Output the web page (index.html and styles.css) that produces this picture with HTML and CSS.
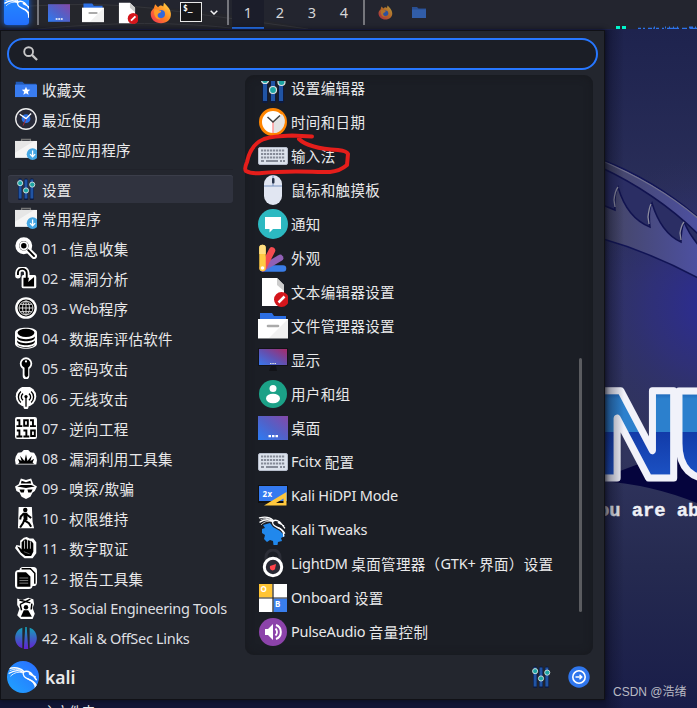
FILE: index.html
```html
<!DOCTYPE html>
<html lang="zh-CN">
<head>
<meta charset="utf-8">
<title>Kali</title>
<link rel="stylesheet" href="styles.css">
</head>
<body>
<svg width="0" height="0" class="defs" aria-hidden="true">
<defs>
<linearGradient id="screen" x1="0" y1="1" x2="1" y2="0"><stop offset="0" stop-color="#2c7cf4"/><stop offset=".5" stop-color="#5261c8"/><stop offset="1" stop-color="#8548a8"/></linearGradient>
<linearGradient id="screen2" x1="0" y1="1" x2="1" y2="0"><stop offset="0" stop-color="#3878ed"/><stop offset=".5" stop-color="#6350b0"/><stop offset="1" stop-color="#a82a68"/></linearGradient>
<linearGradient id="off" x1="0" y1="0" x2="0" y2="1"><stop offset="0" stop-color="#12a4b8"/><stop offset="1" stop-color="#6420d0"/></linearGradient>
<linearGradient id="fox" x1="1" y1="0" x2="0" y2="1"><stop offset="0" stop-color="#ffe14a"/><stop offset=".5" stop-color="#ff8522"/><stop offset="1" stop-color="#f0285a"/></linearGradient>
<symbol id="dragon" viewBox="0 0 30 30"><g fill="none" stroke="#fff" stroke-linecap="round" stroke-linejoin="round"><path stroke-width="1.3" d="M1.500 7C7 5.700 12 6 15.500 9.500M2 11.500C7 8.500 12 8.500 15.500 11M15.500 9.500C14 14 17 15.500 20 17C25 19 27 22 26.500 26"/><path stroke-width=".8" d="M3 8.800C8 7 12 7.500 14 9.500M3.500 14C7 10.500 11 10 14 11"/><path stroke-width="1.400" d="M15.500 10.500C18 8.500 22 10 24 13L27.500 17.500M21 12L26.500 15M20 17C23 18 26 20 27.500 23"/></g></symbol>
<symbol id="desktop" viewBox="0 0 30 30"><path fill="url(#screen)" d="M0 3h30v24H0z"/><path fill="#fff" d="M10.500 22h2.500v2.300h-2.500zm3.500 0h2.500v2.300H14zm3.500 0H20v2.300h-2.500z"/></symbol>
<symbol id="files" viewBox="0 0 30 30"><path fill="#2c6fe4" d="M2 2h12l2 3h12v8H2z"/><path fill="#f1f1f1" d="M0 8h30v19.500H0z"/><path fill="#fff" d="M0 8h30L11 27H0z"/><path stroke="#aaa" stroke-width="2.600" stroke-linecap="round" d="M10 15h10"/></symbol>
<symbol id="editor" viewBox="0 0 30 30"><path fill="#fff" d="M4 1h15l7 7v21H4z"/><path fill="#ccc" d="M19 1v7l7 6V8z"/><circle cx="23.500" cy="22.500" r="7.500" fill="#d4161c"/><path stroke="#fff" stroke-width="2.500" d="M20.500 25.500l6-6"/></symbol>
<symbol id="firefox" viewBox="0 0 30 30"><path fill="url(#fox)" d="M5 9l2-6 4 4c2-3 5-3 7-1l1-5c4 4 9 8 9.500 15C29 24 23 29 15 29S1 24 1 16c0-3 2-5 4-7z"/><circle cx="15" cy="16.500" r="5.500" fill="#3269dc"/><path fill="#ff9b29" d="M6 10c3-1 6 1 9 2 1 2-2 3-4 4-2 4 1 7 5 7-7 3-12-4-10-13z"/></symbol>
<symbol id="foldstar" viewBox="0 0 30 30"><path fill="#225bb9" d="M1 5h9l3 3h16v6H1z"/><path fill="#397cf0" d="M0 9h30v17H0z"/><path fill="#fff" d="M15 12l1.600 3.700 4.200.3-3.200 2.700 1 4.300-3.600-2.300-3.600 2.300 1-4.300L9.200 16l4.200-.3z"/></symbol>
<symbol id="recent" viewBox="0 0 30 30"><circle cx="15" cy="15" r="14" fill="#282a38" stroke="#eee" stroke-width="1.800"/><circle cx="15" cy="14.500" r="6" fill="#2a70e6"/><path d="M6.500 8.500l8.500 6 7-7" fill="none" stroke="#fff" stroke-width="1.800"/><path d="M15 15l-4 9" stroke="#b02a35" stroke-width="1.300"/></symbol>
<symbol id="allapps" viewBox="0 0 30 30"><path d="M9 5V2h12v3" fill="none" stroke="#777" stroke-width="1.800"/><path fill="#e6e6e6" d="M0 4h30v23H0z"/><path fill="#fff" d="M0 20L26 4h4v23H0z" opacity=".6"/><circle cx="24" cy="22" r="8" fill="#45a7e4"/><path d="M24 17v8m-3.500-3l3.500 3.500 3.500-3.500" fill="none" stroke="#fff" stroke-width="1.800"/></symbol>
<symbol id="sliders" viewBox="0 0 30 30"><path d="M7 3v25M15 3v25M23 3v25" stroke="#0d1a40" stroke-width="5.500" stroke-linecap="round"/><path d="M7 2v26M15 2v26M23 2v26" stroke="#2054a4" stroke-width="4"/><g fill="#1da6a5" stroke="#dce4e4" stroke-width="1.200"><circle cx="7" cy="7" r="3.500"/><circle cx="15" cy="17" r="3.500"/><circle cx="23.500" cy="9" r="3.500"/></g></symbol>
<symbol id="search2" viewBox="0 0 30 30"><path d="M18 18l8 8" stroke="#fff" stroke-width="8" stroke-linecap="round"/><circle cx="12" cy="12" r="9" fill="#000" stroke="#fff" stroke-width="5"/><circle cx="12" cy="12" r="5" fill="none" stroke="#fff" stroke-width="2.500"/><path d="M18 18l8 8" stroke="#000" stroke-width="2.500" stroke-linecap="round"/></symbol>
<symbol id="unlock" viewBox="0 0 30 30"><path d="M4 12V8a6 5.500 0 0 1 12 0v6" fill="none" stroke="#fff" stroke-width="7.500" stroke-linecap="round"/><rect x="9" y="11" width="20" height="18" rx="2.500" fill="#fff"/><path d="M4 11V8a6 5.500 0 0 1 12 0v7" fill="none" stroke="#000" stroke-width="2.600"/><path fill="#000" d="M11.500 14.500H19l-1 6 8-7v13H11.500z"/></symbol>
<symbol id="globe" viewBox="0 0 30 30"><circle cx="15" cy="15" r="14.800" fill="#fff"/><circle cx="15" cy="15" r="11.500" fill="#000"/><g fill="none" stroke="#ddd" stroke-width="1.300"><circle cx="15" cy="15" r="9.500"/><ellipse cx="15" cy="15" rx="4.700" ry="9.500"/><path d="M5.500 15h19M7 10h16M7 20h16M15 5.500v19"/></g></symbol>
<symbol id="db" viewBox="0 0 30 30"><path fill="#fff" d="M0 7C1-1 29-1 30 7v16c-1 9-29 9-30 0z"/><ellipse cx="15" cy="8" rx="11.500" ry="5.500"/><path d="M3 13c4 5 20 5 24 0v2c-2 6-22 6-24 0zM3 18.500c4 5 20 5 24 0v2c-2 6-22 6-24 0zM3 24c4 5 20 5 24 0-2 6-22 6-24 0z"/></symbol>
<symbol id="key" viewBox="0 0 30 30"><circle cx="15" cy="9" r="6" stroke="#fff" stroke-width="5"/><path d="M15 12v14" stroke="#fff" stroke-width="9" stroke-linecap="round"/><path d="M9 9a6 6 0 1 1 9 5.200V26l-3 2-2-3V14.500Q9 13 9 9z"/><circle cx="15" cy="6" r="1.500" fill="#fff"/></symbol>
<symbol id="wireless" viewBox="0 0 30 30"><circle cx="15" cy="13" r="14" fill="#fff"/><path d="M15 13v14" stroke="#fff" stroke-width="7" stroke-linecap="round"/><g fill="none" stroke="#000" stroke-width="1.800"><path d="M11 18a5.500 5.500 0 0 1 0-9M19 18a5.500 5.500 0 0 0 0-9M8 21a10 10 0 0 1 0-15M22 21a10 10 0 0 0 0-15"/><path d="M15 13v14"/></g><circle cx="15" cy="13" r="2.200"/></symbol>
<symbol id="binary" viewBox="0 0 30 30"><rect width="30" height="30" rx="3" fill="#fff"/><g fill="none" stroke="#000" stroke-width="2.600"><path d="M2.500 4.500H6v8M2 12.500h8M12.500 4.500h5v7.500h-5zM20.500 4.500h4v8M20.500 12.500h8M2.500 18.500H6v8M2 26.500h8M11.500 18.500h4v8M11.500 26.500h8M22 18.500h5V26h-5z"/></g></symbol>
<symbol id="exploit" viewBox="0 0 30 30"><path fill="#fff" d="M1 13l3-5 5-1 3-3h6l3 3 5 1 3 5 1 5-1 6H1l-1-6z"/><path d="M4 23l2-2-2-5 5 3-2-7 6 7 2-9 2 9 6-7-2 7 5-3-2 5 2 2z"/></symbol>
<symbol id="spy" viewBox="0 0 30 30"><path fill="#fff" d="M8 2l7 2 7-2 3 8 5 3-3 6-3 2-3 6-6 3-6-3-3-6-4-2-2-6 5-3z"/><path d="M8 9l1-4 6 2 6-2 1 4zM3 13l5-2h14l5 2-12 2zM6 17h7l-1 4H8zm11 0h7l-2 4h-4z"/></symbol>
<symbol id="exit" viewBox="0 0 30 30"><path fill="#fff" d="M5 0h18l1 20 2 9H4z"/><circle cx="14" cy="4" r="3"/><path d="M12 9l5 2 5 4M14 10v9l5 3 3 5M13 17l-2 5-4 6M12 9l-4 4-1 4" stroke="#000" stroke-width="2.800" fill="none"/><path d="M11 8h6v10h-5z"/></symbol>
<symbol id="hand" viewBox="0 0 30 30"><path fill="#fff" d="M7 5l5-4 4-1 4 2h5l4 5v15l-5 7H13l-6-5-7-9 2-4 5 1z"/><path d="M9 17V7l3-3 2-1 3 1 3 1 3 1 2 3v11l-3 6h-8l-6-5-5-8 3 1z"/><path d="M13 5v11M17 4v12M21 6v10" stroke="#fff" stroke-width="1"/><path d="M12 20l8 3" stroke="#777"/></symbol>
<symbol id="docs" viewBox="0 0 30 30"><rect x="6" y="0" width="24" height="26" rx="5" fill="#fff"/><path d="M9 2.500h12l6 6V23" fill="none" stroke="#000" stroke-width="2"/><rect x="0" y="4" width="24" height="26" rx="5" fill="#fff"/><path d="M3 7h12l6 6v14H3z"/><path d="M6 15h12M6 18.500h12M6 22h12" stroke="#aaa"/></symbol>
<symbol id="social" viewBox="0 0 30 30"><path fill="#fff" d="M3 2l7 2 8-3 7 2 1 7-2 5 3 8-3 7H8l-5-5 3-9-3-5z"/><path d="M6 4l15 4M21 3L7 10M7 10l2 8M23 9l-1 8" stroke="#000" stroke-width="2"/><circle cx="15" cy="14" r="3"/><path d="M8 27l4-9h6l5 9z"/></symbol>
<symbol id="offsec" viewBox="0 0 30 30"><path fill="url(#off)" d="M10 1v28C-3 25-3 5 10 1zm10 0v28c13-4 13-24 0-28zM14 0h2l2 30h-6z"/></symbol>
<symbol id="clock" viewBox="0 0 30 30"><circle cx="15" cy="15" r="12.500" fill="#fff" stroke="#ff8500" stroke-width="3"/><path d="M15 15l9-8a11.500 11.500 0 0 1-9 19z" fill="#e3e3e3"/><path d="M15 15v11" stroke="#ff9a9a" stroke-width="1.500"/><path d="M9.500 10l5.500 5 7-6.500" fill="none" stroke="#404040" stroke-width="1.500"/></symbol>
<symbol id="keyboard" viewBox="0 0 30 30"><rect x=".5" y="6.500" width="29" height="17" rx="1.500" fill="#dce2ec" stroke="#b6bdcb"/><g stroke="#858b98" stroke-width="2.200"><path stroke-dasharray="2.200 .8" d="M3 9.500h24M3 13h24M3 16.500h24"/><path d="M3 20h3M8 20h12M22 20h2m1 0h2"/></g></symbol>
<symbol id="mouse" viewBox="0 0 30 30"><rect x="6" y="0" width="18" height="30" rx="9" fill="#e1e6f2"/><path d="M6 11h18M15 0v11" stroke="#7893c0"/><rect x="14" y="3" width="2.500" height="5.500" rx="1" fill="#273349"/></symbol>
<symbol id="chat" viewBox="0 0 30 30"><circle cx="15" cy="15" r="15" fill="#2cb9c1"/><path fill="#fff" d="M7 8h16v12h-8l-3.500 3.500V20H7z"/></symbol>
<symbol id="palette" viewBox="0 0 30 30"><g stroke-width="6.500" stroke-linecap="round"><path d="M5 25.500h20" stroke="#3a7de7"/><path d="M5 25l17-10" stroke="#9060b5"/><path d="M5 25L14 7.500" stroke="#f44b50"/><path d="M4.500 25V5" stroke="#ffcb43"/></g><path d="M1.200 11V5a3.200 3.200 0 0 1 6.500 0v6z" fill="#ffdf82"/><circle cx="4.500" cy="25" r="1.800" fill="#fff"/></symbol>
<symbol id="display" viewBox="0 0 30 30"><path fill="#121318" d="M0 3h30v18H0zM13 21h5l1 5h-8z"/><path fill="url(#screen2)" d="M1 4h28v16H1z"/><path fill="#ddd" d="M12 18h1.500v1H12zm2.300 0h1.500v1h-1.500zm2.300 0H18v1h-1.500z"/></symbol>
<symbol id="user" viewBox="0 0 30 30"><circle cx="15" cy="15" r="14" fill="#1ba187"/><circle cx="15" cy="9.500" r="3.500" fill="#fff"/><ellipse cx="15" cy="19.500" rx="7" ry="4.800" fill="#fff"/></symbol>
<symbol id="hidpi" viewBox="0 0 30 30"><path fill="#111" d="M0 4h30v18H0z"/><path fill="#347af0" d="M1 5h28v15H1z"/><path fill="#ffc83d" fill-rule="evenodd" d="M6 24.500L28.500 11v13.500zM18 22h7.500v-4.500z"/><text class="hidpi-label" x="4.500" y="16">2x</text></symbol>
<symbol id="tweaks" viewBox="0 0 30 30"><path fill="#2188ec" d="M5 10l7-2 3 4 7 4 5 5-4 2 1 3-4 1-.500 3h-4l-.5-4-3-1-3 2-3-3 1-4-3-2V14l3-1z"/><use href="#dragon" width="29" height="29" y="-4"/></symbol>
<symbol id="lightdm" viewBox="0 0 30 30"><path d="M8 12V8a7 7 0 0 1 14 0v4" fill="none" stroke="#2c2e37" stroke-width="3"/><circle cx="15" cy="18" r="8.700" fill="#292a35" stroke="#fff" stroke-width="3"/><path fill="#ff434b" d="M12 17l6-2-1 5c-2 3-6 1-5-3z"/></symbol>
<symbol id="onboard" viewBox="0 0 30 30"><path fill="#fff" d="M1 1h28v28H1z"/><path fill="#ffc433" d="M1 1h13.500v13.500H1z"/><path fill="#397eed" d="M15.500 15.500H29V29H15.500z"/><path d="M15 1v28M1 15h28" stroke="#222" stroke-width="1.200"/><text class="key-label" x="2.500" y="8.500">O</text><text class="key-label" x="17" y="23.500">B</text></symbol>
<symbol id="volume" viewBox="0 0 30 30"><circle cx="15" cy="15" r="14" fill="#8c43aa"/><path fill="#fff" d="M7 12h3l5-5v16l-5-5H7z"/><path d="M17.500 11.500a5 5 0 0 1 0 7M18 8a7.500 7.500 0 0 1 0 14" fill="none" stroke="#fff" stroke-width="2"/></symbol>
</defs>
</svg>

<main class="desktop">
<svg class="wallpaper" viewBox="0 0 697 708">
<defs>
<radialGradient id="glow" gradientUnits="userSpaceOnUse" cx="715" cy="305" r="150"><stop offset="0" stop-color="#2b2b98"/><stop offset=".45" stop-color="#2f2f80" stop-opacity=".7"/><stop offset="1" stop-color="#2f315f" stop-opacity="0"/></radialGradient>
<linearGradient id="sky" x1="0" y1="0" x2="0" y2="1"><stop offset="0" stop-color="#1c214c"/><stop offset=".4" stop-color="#30345f"/><stop offset=".65" stop-color="#30345d"/><stop offset=".8" stop-color="#252a50"/><stop offset="1" stop-color="#191d49"/></linearGradient>
<linearGradient id="wing" gradientUnits="userSpaceOnUse" x1="604" y1="0" x2="697" y2="0"><stop offset="0" stop-color="#444563"/><stop offset="1" stop-color="#4d50a0"/></linearGradient>
<linearGradient id="letters" gradientUnits="userSpaceOnUse" x1="0" y1="392" x2="0" y2="478"><stop offset="0" stop-color="#1b62b5"/><stop offset=".08" stop-color="#2c80cd"/><stop offset=".46" stop-color="#2c80cd"/><stop offset=".47" stop-color="#123ba9"/><stop offset="1" stop-color="#1c52c4"/></linearGradient>
<linearGradient id="edge" x1="0" y1="0" x2="1" y2="0"><stop offset="0" stop-color="#0b0d20" stop-opacity=".5"/><stop offset="1" stop-color="#0b0d20" stop-opacity="0"/></linearGradient>
</defs>
<path fill="url(#sky)" d="M0 0h697v708H0z"/><path fill="url(#glow)" d="M500 29h197v500H500z"/>
<path fill="url(#wing)" stroke="#111455" stroke-width="1.500" d="M600 159Q655 180 700 219V279Q650 252 600 238z"/>
<path fill="#2b2e64" stroke="#111350" stroke-width="1.500" d="M600 167Q658 194 700 236V247Q690 236 684 222Q681 230 681 242Q661 233 652 203Q648 210 650 227Q627 218 618 187Q614 194 615 210L600 204z"/>
<g fill="none" stroke="#8b8b9e" stroke-width="1.300"><path d="M600 160Q658 184 700 220" stroke="#71718f"/><path d="M615 207l-1-7q1-9 4-13M649 224l-1-7q1-9 3-13M681 240l-1-7q1-7 4-11"/></g>
<path fill="#05043d" d="M600 481Q650 484 697 503V457L668 453 604 477z"/><path d="M667 453l30 4" stroke="#7b83bd"/>
<text class="banner" x="585" y="478" textLength="101">N</text><text class="banner" x="668" y="478">U</text>
<text class="tagline" x="598" y="516">ou are ab</text>
<path fill="url(#edge)" d="M604 30h20v678h-20z"/><path fill="#121535" d="M0 699h606v9H0z"/>
</svg>
<span class="desk-label">主文件夹</span>

<header class="panel">
<svg class="swoosh" viewBox="0 0 697 29" aria-hidden="true"><path d="M30 4Q170 0 312 29H200Q80 22 30 29z" fill="#25262c"/><path d="M30 6Q100 2 150 8T308 29M38 29Q150 18 240 29" fill="none" stroke="#34353b"/><path fill="#00f5cb" d="M616 26h4v3h-4zM622 26h4v3h-4z"/><path d="M638 28.500h3m2 0h2m3 0h4m2-1v2m2-1h3m3 0h2m3 0h12m3 0h5m3 0h8" stroke="#2c73e8" stroke-width="1.500"/><path d="M654 27.500h1m10 0h1m3 0h1m3 0h1m3 0h1m11 0h4m2 0h1" stroke="#2c73e8" stroke-width="2"/></svg>
<span class="kali-button"><svg class="kali-logo"><use href="#dragon"/></svg></span>
<i class="sep"></i>
<svg class="launch first"><use href="#desktop"/></svg>
<svg class="launch"><use href="#files"/></svg>
<svg class="launch"><use href="#editor"/></svg>
<svg class="launch"><use href="#firefox"/></svg>
<span class="terminal">$_</span>
<svg class="chevron" viewBox="0 0 8 5"><path d="M.7.7L4 4 7.300.7" fill="none" stroke="#f3f3f3" stroke-width="1.500"/></svg>
<i class="sep after"></i>
<nav class="spaces"><span class="space active">1</span><span class="space">2</span><span class="space">3</span><span class="space">4</span></nav>
<i class="sep end"></i>
<svg class="task"><use href="#firefox"/></svg>
<svg class="task folder" viewBox="0 0 14 11"><path fill="#294f92" d="M0 0h5l1.500 1.500H14V11H0z"/><path fill="#315da8" d="M0 2.500h14V11H0z"/></svg>
</header>

<section class="menu">
<div class="search"><svg viewBox="0 0 16 16"><circle cx="6" cy="6" r="4.700" fill="none" stroke="#c7c7c8" stroke-width="2"/><path d="M9.500 9.500l5.500 5.500" stroke="#c7c7c8" stroke-width="2.400"/></svg></div>
<div class="columns">
<nav class="categories">
<a class="cat"><svg><use href="#foldstar"/></svg>收藏夹</a>
<a class="cat"><svg><use href="#recent"/></svg>最近使用</a>
<a class="cat"><svg><use href="#allapps"/></svg>全部应用程序</a>
<hr>
<a class="cat selected"><svg><use href="#sliders"/></svg>设置</a>
<a class="cat"><svg><use href="#allapps"/></svg>常用程序</a>
<a class="cat"><svg><use href="#search2"/></svg><b>01 -&nbsp;</b>信息收集</a>
<a class="cat"><svg><use href="#unlock"/></svg><b>02 -&nbsp;</b>漏洞分析</a>
<a class="cat"><svg><use href="#globe"/></svg><b>03 - Web</b>程序</a>
<a class="cat"><svg><use href="#db"/></svg><b>04 -&nbsp;</b>数据库评估软件</a>
<a class="cat"><svg><use href="#key"/></svg><b>05 -&nbsp;</b>密码攻击</a>
<a class="cat"><svg><use href="#wireless"/></svg><b>06 -&nbsp;</b>无线攻击</a>
<a class="cat"><svg><use href="#binary"/></svg><b>07 -&nbsp;</b>逆向工程</a>
<a class="cat"><svg><use href="#exploit"/></svg><b>08 -&nbsp;</b>漏洞利用工具集</a>
<a class="cat"><svg><use href="#spy"/></svg><b>09 -&nbsp;</b>嗅探/欺骗</a>
<a class="cat"><svg><use href="#exit"/></svg><b>10 -&nbsp;</b>权限维持</a>
<a class="cat"><svg><use href="#hand"/></svg><b>11 -&nbsp;</b>数字取证</a>
<a class="cat"><svg><use href="#docs"/></svg><b>12 -&nbsp;</b>报告工具集</a>
<a class="cat"><svg><use href="#social"/></svg><b>13 - Social Engineering Tools</b></a>
<a class="cat"><svg><use href="#offsec"/></svg><b>42 - Kali &amp; OffSec Links</b></a>
</nav>
<div class="apps"><div class="scroll">
<a class="app"><svg><use href="#sliders"/></svg>设置编辑器</a>
<a class="app"><svg><use href="#clock"/></svg>时间和日期</a>
<a class="app"><svg><use href="#keyboard"/></svg>输入法</a>
<a class="app"><svg><use href="#mouse"/></svg>鼠标和触摸板</a>
<a class="app"><svg><use href="#chat"/></svg>通知</a>
<a class="app"><svg><use href="#palette"/></svg>外观</a>
<a class="app"><svg><use href="#editor"/></svg>文本编辑器设置</a>
<a class="app"><svg><use href="#files"/></svg>文件管理器设置</a>
<a class="app"><svg><use href="#display"/></svg>显示</a>
<a class="app"><svg><use href="#user"/></svg>用户和组</a>
<a class="app"><svg><use href="#desktop"/></svg>桌面</a>
<a class="app"><svg><use href="#keyboard"/></svg><b>Fcitx&nbsp;</b>配置</a>
<a class="app"><svg><use href="#hidpi"/></svg><b>Kali HiDPI Mode</b></a>
<a class="app"><svg><use href="#tweaks"/></svg><b>Kali Tweaks</b></a>
<a class="app"><svg><use href="#lightdm"/></svg><b>LightDM&nbsp;</b>桌面管理器（<b>GTK+&nbsp;</b>界面）设置</a>
<a class="app"><svg><use href="#onboard"/></svg><b>Onboard&nbsp;</b>设置</a>
<a class="app"><svg><use href="#volume"/></svg><b>PulseAudio&nbsp;</b>音量控制</a>
</div><i class="thumb"></i></div>
</div>
<footer class="account"><span class="avatar"><svg><use href="#dragon"/></svg></span><span class="name">kali</span>
<svg class="tool"><use href="#sliders"/></svg>
<svg class="logout" viewBox="0 0 22 22"><circle cx="11" cy="11" r="10.700" fill="#2f76ed"/><circle cx="11" cy="11" r="6.200" fill="none" stroke="#fff" stroke-width="1.600"/><path d="M7.500 11h6M11.500 8.800l2.300 2.200-2.300 2.200" fill="none" stroke="#fff" stroke-width="1.400"/></svg>
</footer>
</section>
<svg class="annotation" viewBox="0 0 697 708"><path d="M312 136.500L292 135.500Q273 136 264 139C254 143 249 152 247 162Q244 169 246 171Q251 174 262 173C289 170 309 172 330 172Q340 171 347 165L348 154Q347 151 338 150C320 149 306 146 299 139" fill="none" stroke="#e51e1b" stroke-width="4" stroke-linecap="round" stroke-linejoin="round"/></svg>
<span class="watermark">CSDN @浩绪</span>
</main>
</body>
</html>
```
FILE: styles.css
```css
* { box-sizing: border-box; }
body { margin: 0; font: 14.5px "Noto Sans", "Noto Sans CJK SC", sans-serif; color: #e9e9ea; }
svg { display: block; flex: none; }
.defs { position: absolute; }
.desktop { position: relative; width: 697px; height: 708px; overflow: hidden; background: #191d49; }
.wallpaper, .annotation { position: absolute; inset: 0; width: 697px; height: 708px; }
.banner { font: bold 119px "DejaVu Sans", sans-serif; fill: url(#letters); stroke: #f1f2fa; stroke-width: 7px; stroke-linejoin: round; }
.tagline { font: bold 18.75px "Liberation Mono", monospace; fill: #eff0f6; stroke: #eff0f6; stroke-width: .4px; }
.desk-label { position: absolute; left: 43px; top: 702px; font-size: 13px; line-height: 18px; }

.panel { position: relative; display: flex; align-items: center; height: 29px; padding: 0 0 4px 4px; background: #23252f; }
.swoosh { position: absolute; inset: 0; width: 697px; height: 29px; }
.panel > :not(.swoosh) { position: relative; }
.kali-button { width: 25px; height: 29px; margin-top: -4px; border-radius: 3px; background: linear-gradient(#238bff, #2370ff); box-shadow: 0 0 6px #1769ed; overflow: hidden; }
.kali-logo { width: 29px; height: 29px; margin: -4px 0 0 -1px; }
.sep { width: 2px; height: 25px; margin-left: 8px; background: #75767c; flex: none; }
.launch { width: 22px; height: 22px; margin-left: 12px; }
.launch.first { margin-left: 9px; }
.terminal { width: 22px; height: 20px; margin: -2px 0 0 8px; padding-left: 2px; border: 1px solid #e8e8e8; background: #171719; font: bold 8px/11px "DejaVu Sans Mono", monospace; color: #fff; }
.launch + .terminal { margin-left: 8px; }
.chevron { width: 8px; height: 5px; margin-left: 8px; }
.sep.after { margin-left: 9px; }
.spaces { display: flex; margin-left: 3px; align-self: flex-start; }
.space { width: 32px; height: 29px; text-align: center; line-height: 24px; font-size: 14.5px; color: #d5d5d8; }
.space.active { background: #1b1d2a; border-bottom: 2px solid #2574f4; }
.sep.end { margin-left: 3px; }
.task { width: 15px; height: 15px; margin-left: 13px; opacity: .65; }
.task.folder { width: 14px; height: 11px; margin-left: 19px; opacity: 1; }

.menu { position: relative; display: flex; flex-direction: column; width: 605px; height: 670px; margin-top: 1px; padding: 7px 7px 0; border: 1px solid #101116; background: #23262e; box-shadow: 0 0 5px #0a0b15; }
.search { width: 591px; height: 32px; margin-left: -1px; flex: none; border: 2px solid #2777ff; border-radius: 16px; padding: 6px 14px; background: #1b1e26; }
.search svg { width: 15px; height: 15px; }
.columns { display: flex; gap: 12px; margin-top: 5px; height: 580px; flex: none; }
.categories { width: 225px; }
.categories hr { height: 1px; margin: 6px 0 5px; border: 0; background: #20222a; }
.cat { display: flex; align-items: center; height: 28px; margin-bottom: 2px; padding-left: 7px; border-radius: 3px; white-space: nowrap; letter-spacing: .3px; }
.cat svg { width: 22px; height: 22px; margin-right: 5px; }
.cat.selected { margin-bottom: 1px; background: #30333f; box-shadow: inset 0 1px #3b3e4a; }
b { font-weight: 400; letter-spacing: -.3px; color: #dedfe1; }
.apps { position: relative; width: 348px; height: 580px; padding-top: 6px; border-radius: 9px; background: #1b1e25; box-shadow: inset 0 0 9px #17191e; }
.scroll { height: 571px; overflow: hidden; }
.app { display: flex; align-items: center; height: 34px; padding: 0 0 2px 13px; white-space: nowrap; letter-spacing: .35px; }
.app b { letter-spacing: -.2px; color: #e9e9ea; }
.app:first-child { margin-top: -10px; }
.app svg { width: 30px; height: 30px; margin: 2px 3px 0 0; }
.thumb { position: absolute; right: 11px; top: 283px; width: 3px; height: 254px; border-radius: 2px; background: #5b5c60; }
.account { display: flex; align-items: center; height: 44px; padding-right: 7px; }
.avatar { width: 32px; height: 32px; margin-left: -1px; border-radius: 50%; background: linear-gradient(45deg, #1fa4ff, #2a6cff); overflow: hidden; }
.avatar svg { width: 32px; height: 32px; }
.name { margin: 0 auto 0 6px; font-size: 17.5px; font-weight: 600; }
.tool { width: 22px; height: 22px; margin-right: 16px; }
.logout { width: 22px; height: 22px; }
.hidpi-label { font: bold 8px "Noto Sans", sans-serif; fill: #fff; }
.key-label { font: bold 8px "Noto Sans", sans-serif; fill: #fff; }
.watermark { position: absolute; left: 613px; top: 683px; font: 12px/18px "Liberation Sans", "Noto Sans CJK SC", sans-serif; color: #b9bac3; white-space: nowrap; }
```
